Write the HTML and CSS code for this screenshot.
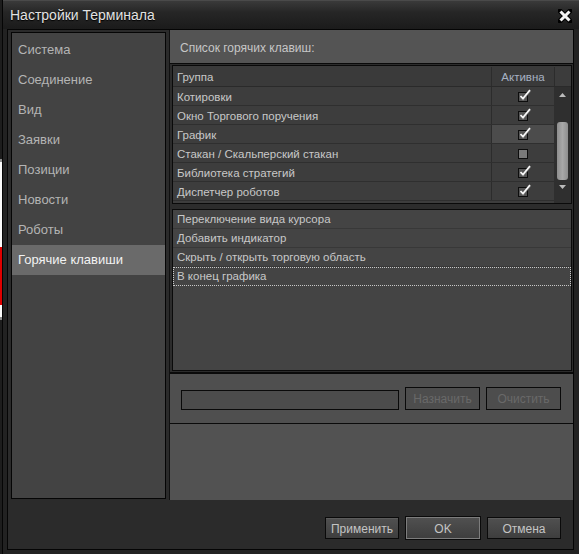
FILE: index.html
```html
<!DOCTYPE HTML>
<html>
    <head>
        <meta charset='utf-8'/>
        <link rel="stylesheet" href="styles.css">
    </head>
    <body>
        <div class="backdrop">
            <div class="bd-dark"></div>
            <div class="bd-line"></div>
            <div class="bd-white"></div>
            <div class="bd-red"></div>
            <div class="bd-white bd-short"></div>
            <div class="bd-line"></div>
            <div class="bd-dark bd-fill"></div>
        </div>
        <div class="window">
            <div class="titlebar">
                <span class="title">Настройки Терминала</span>
                <svg class="close" width="14" height="14" viewBox="0 0 14 14">
                    <path d="M2 2 L12 12 M12 2 L2 12" stroke="#000" stroke-width="5" stroke-linecap="square"/>
                    <path d="M2.5 2.5 L11.5 11.5 M11.5 2.5 L2.5 11.5" stroke="#f2f2f2" stroke-width="3"/>
                </svg>
            </div>
            <div class="frame">
                <div class="client">
                    <div class="main">
                        <ul class="nav">
                            <li>Система</li>
                            <li>Соединение</li>
                            <li>Вид</li>
                            <li>Заявки</li>
                            <li>Позиции</li>
                            <li>Новости</li>
                            <li>Роботы</li>
                            <li class="cur">Горячие клавиши</li>
                        </ul>
                        <div class="panel">
                            <div class="panel-head">Список горячих клавиш:</div>
                            <div class="groups">
                                <div class="grid">
                                    <div class="grid-head">
                                        <div class="c-group">Группа</div>
                                        <div class="c-active">Активна</div>
                                        <div class="c-corner"></div>
                                    </div>
                                    <div class="grid-body">
                                        <div class="rows">
                                            <div class="row"><div class="c-group">Котировки</div><div class="c-active"><svg class="chk" width="14" height="14" viewBox="0 0 14 14"><rect x="1.5" y="4.5" width="9" height="9" fill="#555" stroke="#0d0d0d"/><path d="M3.5 8.5 L6 11 L13 2.5" fill="none" stroke="#777" stroke-width="2.4"/><path d="M3.5 8 L6 10.5 L13 2" fill="none" stroke="#fafafa" stroke-width="1.6"/></svg></div></div>
                                            <div class="row"><div class="c-group">Окно Торгового поручения</div><div class="c-active"><svg class="chk" width="14" height="14" viewBox="0 0 14 14"><rect x="1.5" y="4.5" width="9" height="9" fill="#555" stroke="#0d0d0d"/><path d="M3.5 8.5 L6 11 L13 2.5" fill="none" stroke="#777" stroke-width="2.4"/><path d="M3.5 8 L6 10.5 L13 2" fill="none" stroke="#fafafa" stroke-width="1.6"/></svg></div></div>
                                            <div class="row sel"><div class="c-group">График</div><div class="c-active"><svg class="chk" width="14" height="14" viewBox="0 0 14 14"><rect x="1.5" y="4.5" width="9" height="9" fill="#555" stroke="#0d0d0d"/><path d="M3.5 8.5 L6 11 L13 2.5" fill="none" stroke="#777" stroke-width="2.4"/><path d="M3.5 8 L6 10.5 L13 2" fill="none" stroke="#fafafa" stroke-width="1.6"/></svg></div></div>
                                            <div class="row"><div class="c-group">Стакан / Скальперский стакан</div><div class="c-active"><svg class="chk" width="14" height="14" viewBox="0 0 14 14"><rect x="1.5" y="4.5" width="9" height="9" fill="#7a7a7a" stroke="#0d0d0d"/></svg></div></div>
                                            <div class="row"><div class="c-group">Библиотека стратегий</div><div class="c-active"><svg class="chk" width="14" height="14" viewBox="0 0 14 14"><rect x="1.5" y="4.5" width="9" height="9" fill="#555" stroke="#0d0d0d"/><path d="M3.5 8.5 L6 11 L13 2.5" fill="none" stroke="#777" stroke-width="2.4"/><path d="M3.5 8 L6 10.5 L13 2" fill="none" stroke="#fafafa" stroke-width="1.6"/></svg></div></div>
                                            <div class="row"><div class="c-group">Диспетчер роботов</div><div class="c-active"><svg class="chk" width="14" height="14" viewBox="0 0 14 14"><rect x="1.5" y="4.5" width="9" height="9" fill="#555" stroke="#0d0d0d"/><path d="M3.5 8.5 L6 11 L13 2.5" fill="none" stroke="#777" stroke-width="2.4"/><path d="M3.5 8 L6 10.5 L13 2" fill="none" stroke="#fafafa" stroke-width="1.6"/></svg></div></div>
                                        </div>
                                        <div class="vscroll">
                                            <svg class="arrow" width="7" height="4" viewBox="0 0 7 4"><path d="M0 4 L3.5 0 L7 4 Z" fill="#bbb"/></svg>
                                            <div class="thumb"></div>
                                            <svg class="arrow" width="7" height="4" viewBox="0 0 7 4"><path d="M0 0 L3.5 4 L7 0 Z" fill="#bbb"/></svg>
                                        </div>
                                    </div>
                                </div>
                            </div>
                            <div class="actions">
                                <div class="list">
                                    <div class="item">Переключение вида курсора</div>
                                    <div class="item">Добавить индикатор</div>
                                    <div class="item">Скрыть / открыть торговую область</div>
                                    <div class="item focus">В конец графика</div>
                                </div>
                            </div>
                            <div class="assign">
                                <div class="keybox"></div>
                                <div class="btn off">Назначить</div>
                                <div class="btn off">Очистить</div>
                            </div>
                            <div class="panel-foot"></div>
                        </div>
                    </div>
                    <div class="buttons">
                        <div class="btn">Применить</div>
                        <div class="btn def">OK</div>
                        <div class="btn">Отмена</div>
                    </div>
                </div>
            </div>
        </div>
    </body>
</html>
```

FILE: styles.css
```css
*{
    box-sizing: border-box;
}
body{
    margin: 0;
    width: 579px;
    height: 554px;
    overflow: hidden;
    display: flex;
    background: #1c1c1c;
    font-family: "Liberation Sans", Arial, sans-serif;
}
/* what shows behind the dialog */
.backdrop{
    width: 3px;
    display: flex;
    flex-direction: column;
}
.bd-dark{
    height: 159px;
    background: #1d1d1d;
}
.bd-line{
    height: 3px;
    background: #8a8a8a;
}
.bd-white{
    height: 85px;
    background: #fafafa;
}
.bd-short{
    height: 12px;
}
.bd-red{
    height: 58px;
    background: #e00000;
}
.bd-fill{
    flex: 1;
}
.window{
    width: 577px;
    height: 554px;
    flex: none;
    display: flex;
    flex-direction: column;
    border-left: 1px solid #050505;
    background: #222;
}
.titlebar{
    height: 29px;
    display: flex;
    align-items: center;
    justify-content: space-between;
    padding: 0 6px 0 7px;
    background: linear-gradient(#3a3a3a, #262626 40%, #1b1b1b);
    border-top: 1px solid #4a4a4a;
}
.title{
    color: #e2e2e2;
    font-size: 14px;
    text-shadow: 0 1px 1px #000;
}
.close{
    margin-right: 1px;
    margin-top: 1px;
}
.frame{
    flex: 1;
    padding: 0 5px 4px 4px;
    display: flex;
}
.client{
    flex: 1;
    border: 1px solid #050505;
    background: #2b2b2b;
    display: flex;
    flex-direction: column;
}
.main{
    height: 470px;
    display: flex;
}
.nav{
    list-style: none;
    margin: 2px 3px 1px 3px;
    padding: 2px 0 0 0;
    width: 155px;
    border: 1px solid #050505;
    background: #434343;
}
.nav li{
    height: 30px;
    line-height: 30px;
    padding-left: 6px;
    font-size: 13px;
    color: #b4b4b4;
}
.nav li.cur{
    background: #6a6a6a;
    color: #f2f2f2;
}
.panel{
    flex: 1;
    display: flex;
    flex-direction: column;
    border-left: 1px solid #111;
    background: #525252;
}
.panel-head{
    height: 33px;
    line-height: 36px;
    padding-left: 10px;
    font-size: 12px;
    color: #c6c6c6;
    background: #545454;
}
.groups{
    height: 141px;
    border-top: 1px solid #0a0a0a;
    background: #2c2c2c;
    padding: 1px 1px 0 2px;
}
.grid{
    height: 139px;
    border: 1px solid #0a0a0a;
    background: #3d3d3d;
    display: flex;
    flex-direction: column;
    font-size: 11.5px;
    color: #c8c8c8;
}
.grid-head{
    height: 21px;
    padding-top: 1px;
    display: flex;
    background: #3a3a3a;
    border-bottom: 1px solid #2a2a2a;
}
.grid-head .c-group{
    line-height: 20px;
}
.grid-head .c-active{
    color: #a6b1c2;
    text-align: center;
    line-height: 20px;
}
.c-group{
    flex: 1;
    padding-left: 4px;
}
.c-active{
    width: 63px;
    border-left: 1px solid #2c2c2c;
    display: flex;
    justify-content: center;
    align-items: center;
}
.c-corner{
    width: 17px;
    border-left: 1px solid #2c2c2c;
    background: #3c3c3c;
}
.grid-body{
    flex: 1;
    display: flex;
}
.rows{
    flex: 1;
}
.row{
    height: 19px;
    display: flex;
    border-bottom: 1px solid #2f2f2f;
    line-height: 20px;
}
.row.sel .c-active{
    background: #4c4c4c;
}
.chk{
    margin-left: 2px;
    margin-top: -2px;
}
.vscroll{
    width: 17px;
    background: #2f2f2f;
    display: flex;
    flex-direction: column;
    align-items: center;
    padding: 6px 0 7px 0;
}
.thumb{
    width: 11px;
    height: 58px;
    margin: 25px 0 5px 0;
    border-radius: 3px;
    background: linear-gradient(90deg, #8e8e8e, #a8a8a8 50%, #8e8e8e);
}
.actions{
    height: 168px;
    background: #2c2c2c;
    padding: 5px 1px 1px 2px;
}
.list{
    height: 162px;
    border: 1px solid #0a0a0a;
    background: #444;
    font-size: 11.5px;
    color: #c8c8c8;
}
.item{
    height: 19px;
    line-height: 19px;
    padding-left: 4px;
    border-bottom: 1px solid #383838;
}
.item.focus{
    border: 1px dotted #c8c8c8;
    padding-left: 3px;
    line-height: 17px;
}
.assign{
    height: 52px;
    border-top: 2px solid #0a0a0a;
    border-bottom: 1px solid #0a0a0a;
    background: #4f4f4f;
    display: flex;
    align-items: flex-end;
    gap: 6px;
    padding: 0 11px 13px 11px;
}
.keybox{
    width: 218px;
    height: 20px;
    border: 1px solid #0a0a0a;
    background: #4c4c4c;
}
.btn{
    width: 75px;
    height: 23px;
    line-height: 22px;
    text-align: center;
    font-size: 12px;
    border: 1px solid #0a0a0a;
    color: #c4c4c4;
    background: linear-gradient(#505050, #3e3e3e);
    box-shadow: inset 0 1px 0 #5c5c5c;
}
.btn.off{
    color: #696969;
    background: #4d4d4d;
    box-shadow: none;
}
.panel-foot{
    flex: 1;
    background: #525252;
}
.buttons{
    flex: 1;
    display: flex;
    justify-content: flex-end;
    gap: 7px;
    padding: 17px 12px 0 0;
}
.buttons .btn{
    width: 74px;
    height: 22px;
}
.btn.def{
    border-color: #7d7d7d;
    box-shadow: 0 0 0 1px #0a0a0a;
}
```
